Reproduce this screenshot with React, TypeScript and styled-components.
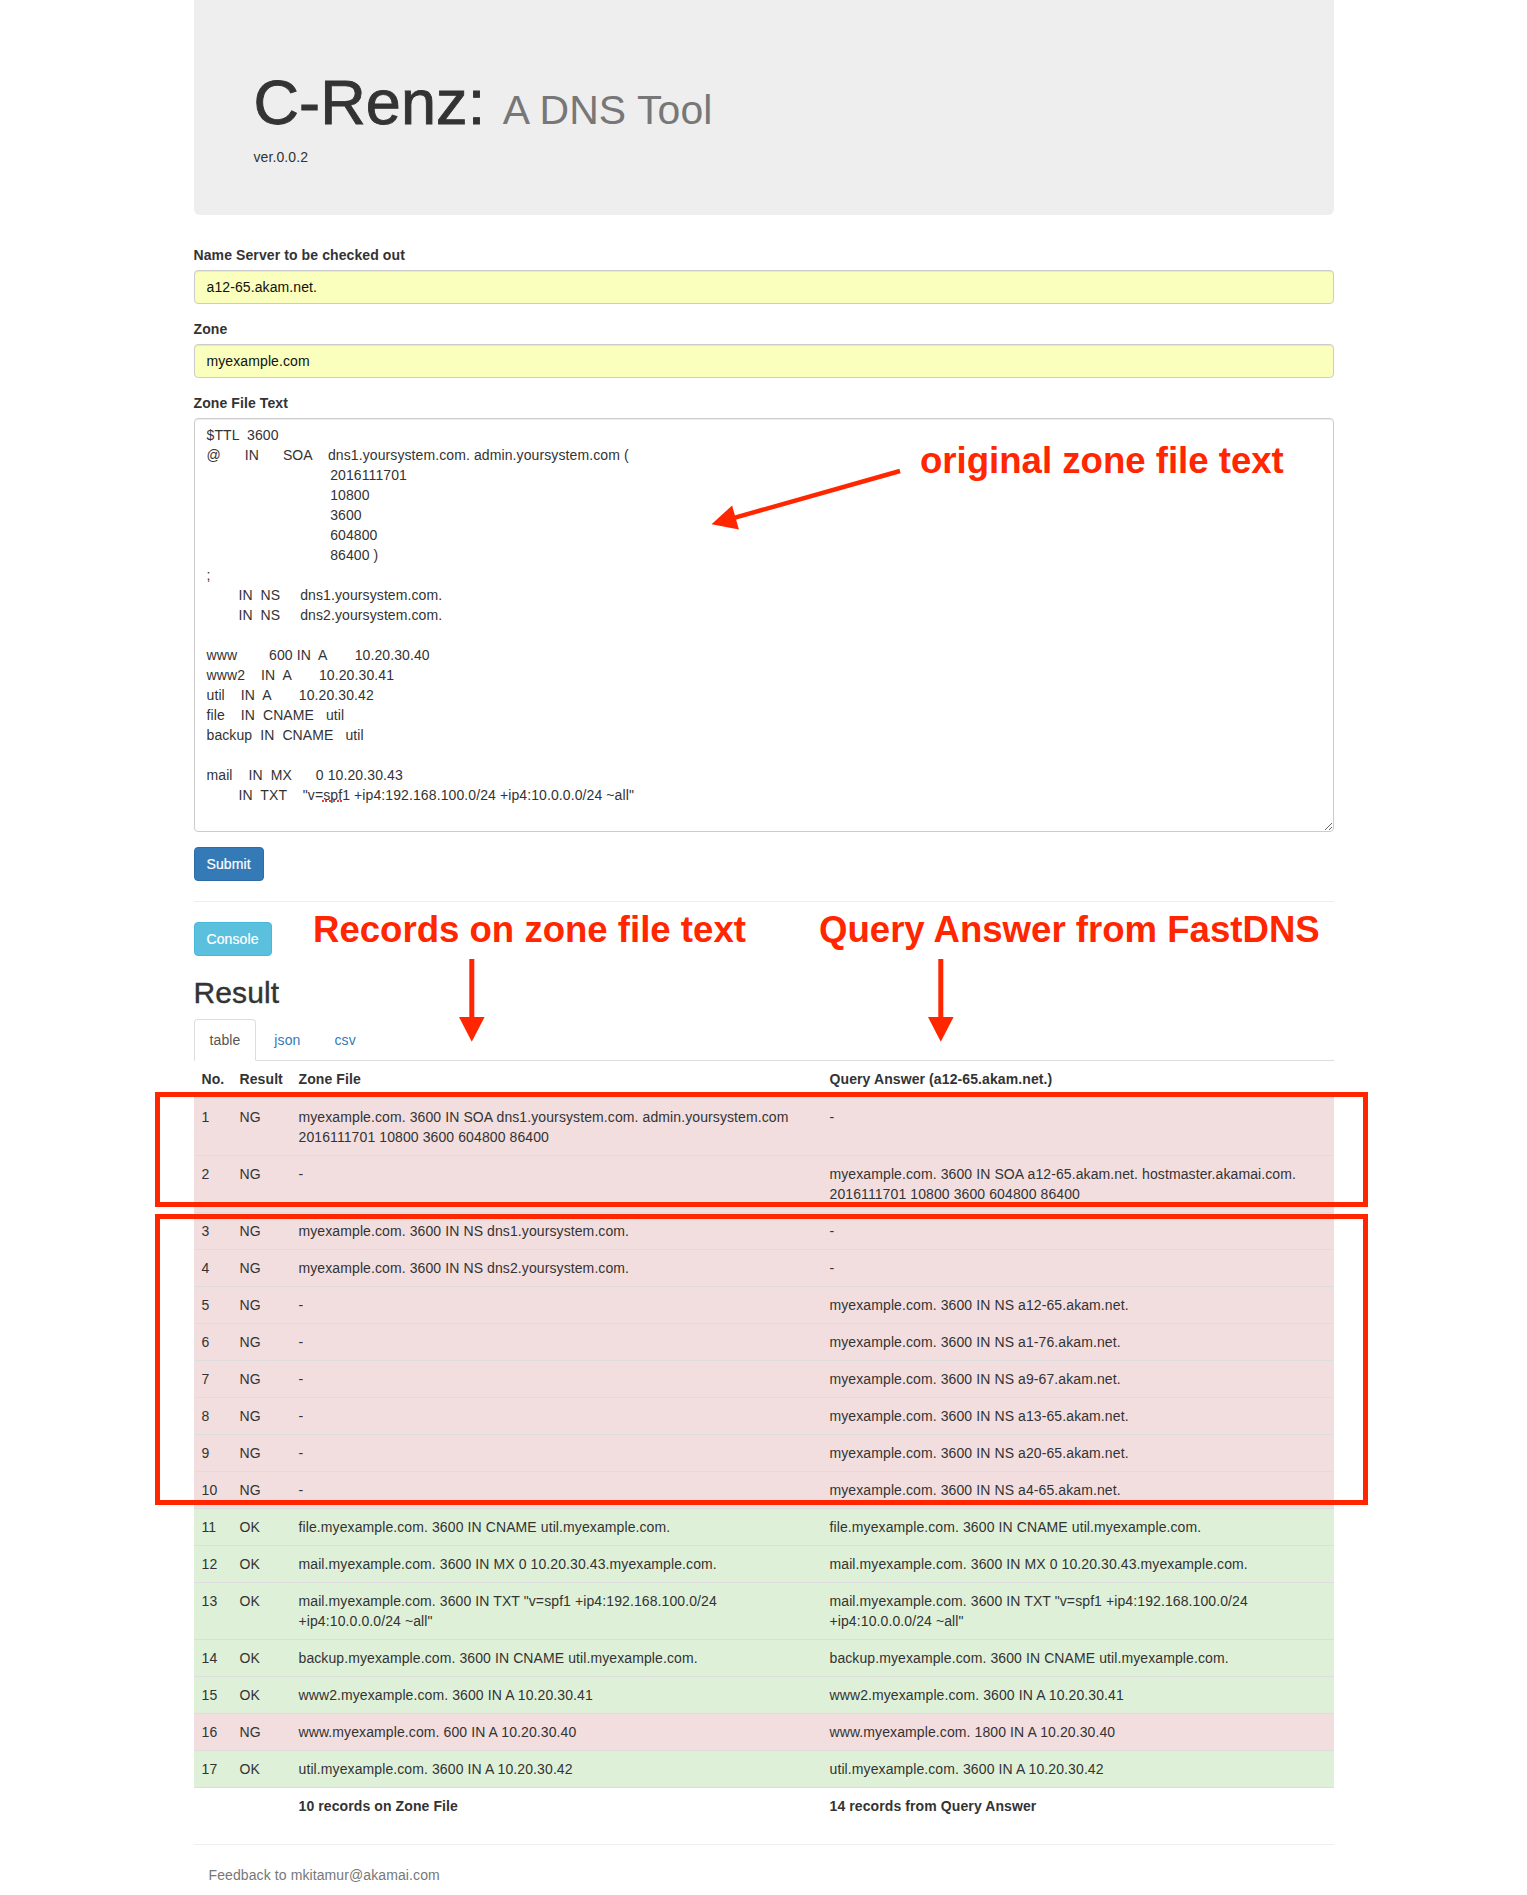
import React from "react";
import styled, { createGlobalStyle, css } from "styled-components";

const RED = "#ff2600";

const GlobalStyle = createGlobalStyle`
  *, *::before, *::after { box-sizing: border-box; }
  html, body { margin: 0; padding: 0; background: #fff; }
  body {
    font-family: "Liberation Sans", Arial, Helvetica, sans-serif;
    font-size: 14px;
    line-height: 1.42857143;
    letter-spacing: 0.1px;
    color: #333;
  }
`;

const Page = styled.div`
  position: relative;
  min-height: 1880px;
`;

const Container = styled.div`
  width: 1170px;
  padding: 0 15px;
  margin: 0 auto;
`;

const Jumbotron = styled.header`
  background: #eee;
  border-radius: 0 0 6px 6px;
  padding: 48px 60px;
  margin-bottom: 30px;
`;

const Title = styled.h1`
  margin: 20px 0 10px;
  font-size: 63px;
  font-weight: 500;
  line-height: 1.1;
  color: #333;
  -webkit-text-stroke: 0.9px #333;
`;

const TitleSub = styled.small`
  font-size: 65%;
  font-weight: 400;
  line-height: 1;
  color: #777;
  -webkit-text-stroke: 0;
`;

const Version = styled.div`
  font-size: 14px;
  line-height: 20px;
`;

const FormGroup = styled.div`
  margin-bottom: 15px;
`;

const Label = styled.label`
  display: inline-block;
  max-width: 100%;
  margin-bottom: 5px;
  font-weight: 700;
`;

const fieldBase = css`
  display: block;
  width: 100%;
  padding: 6px 12px;
  font-family: inherit;
  font-size: 14px;
  line-height: 1.42857143;
  letter-spacing: 0.1px;
  border: 1px solid #ccc;
  border-radius: 4px;
  box-shadow: inset 0 1px 1px rgba(0, 0, 0, 0.075);
  outline: none;
`;

const Input = styled.input`
  ${fieldBase};
  height: 34px;
  color: #111;
  background: #faffbd;
`;

const TextArea = styled.textarea`
  ${fieldBase};
  height: 414px;
  color: #333;
  background: #fff;
  white-space: pre;
  overflow: hidden;
`;

const ButtonRow = styled.div`
  display: flex;
`;

const Button = styled.button<{ $variant: "primary" | "info" }>`
  display: inline-block;
  padding: 6px 12px;
  font-family: inherit;
  font-size: 14px;
  line-height: 1.42857143;
  letter-spacing: 0.1px;
  color: #fff;
  border: 1px solid;
  border-radius: 4px;
  cursor: pointer;
  -webkit-text-stroke: 0.2px #fff;
  ${(p) =>
    p.$variant === "primary"
      ? css`
          background: #337ab7;
          border-color: #2e6da4;
        `
      : css`
          background: #5bc0de;
          border-color: #46b8da;
        `}
`;

const Rule = styled.hr`
  height: 0;
  margin: 20px 0;
  border: 0;
  border-top: 1px solid #eee;
`;

const SectionTitle = styled.h2`
  margin: 20px 0 10px;
  font-size: 30px;
  font-weight: 500;
  line-height: 1.1;
  color: #333;
  -webkit-text-stroke: 0.4px #333;
`;

const TabList = styled.ul`
  display: flex;
  list-style: none;
  margin: 0;
  padding: 0;
  border-bottom: 1px solid #ddd;
`;

const TabItem = styled.li`
  margin-bottom: -1px;
`;

const TabLink = styled.a<{ $active?: boolean }>`
  display: block;
  margin-right: 2px;
  padding: 10px 15px;
  line-height: 1.42857143;
  border: 1px solid transparent;
  border-radius: 4px 4px 0 0;
  text-decoration: none;
  color: #337ab7;
  ${(p) =>
    p.$active &&
    css`
      color: #555;
      background: #fff;
      border-color: #ddd #ddd transparent;
    `}
`;

const Table = styled.table`
  width: 100%;
  border-collapse: collapse;
  border-spacing: 0;
  table-layout: fixed;
  margin-bottom: 20px;
`;

const Th = styled.th`
  padding: 8px;
  text-align: left;
  vertical-align: bottom;
  border-bottom: 2px solid #ddd;
  line-height: 1.42857143;
  font-weight: 700;
`;

const Row = styled.tr<{ $status?: "OK" | "NG" }>`
  background: ${(p) =>
    p.$status === "OK" ? "#dff0d8" : p.$status === "NG" ? "#f2dede" : "transparent"};
`;

const Td = styled.td<{ $bold?: boolean }>`
  padding: 8px;
  vertical-align: top;
  border-top: 1px solid #ddd;
  line-height: 1.42857143;
  font-weight: ${(p) => (p.$bold ? 700 : 400)};
`;

const Footer = styled.footer`
  padding: 0 15px;
  color: #777;
  line-height: 20px;
`;

/* ---------- annotation layer (drawn over the page) ---------- */

const Callout = styled.div<{ $x: number; $y: number }>`
  position: absolute;
  left: ${(p) => p.$x}px;
  top: ${(p) => p.$y}px;
  font-family: "Liberation Sans", Arial, sans-serif;
  font-weight: 700;
  font-size: 36.6px;
  line-height: 37px;
  letter-spacing: 0;
  color: ${RED};
  white-space: nowrap;
`;

const Frame = styled.div<{ $x: number; $y: number; $w: number; $h: number }>`
  position: absolute;
  left: ${(p) => p.$x}px;
  top: ${(p) => p.$y}px;
  width: ${(p) => p.$w}px;
  height: ${(p) => p.$h}px;
  border: 5px solid ${RED};
  pointer-events: none;
`;

const SpellMark = styled.div<{ $x: number; $y: number; $w: number }>`
  position: absolute;
  left: ${(p) => p.$x}px;
  top: ${(p) => p.$y}px;
  width: ${(p) => p.$w}px;
  height: 0;
  border-bottom: 2px dotted #e0453a;
  pointer-events: none;
`;

const ArrowSvg = styled.svg<{ $x: number; $y: number }>`
  position: absolute;
  left: ${(p) => p.$x}px;
  top: ${(p) => p.$y}px;
  overflow: visible;
`;

const DownArrow: React.FC<{ x: number; y: number }> = ({ x, y }) => (
  <ArrowSvg $x={x} $y={y} width={28} height={90} viewBox="0 0 28 90">
    <line x1={13.8} y1={4} x2={13.8} y2={64} stroke={RED} strokeWidth={5} />
    <polygon points="1,62 26.6,62 13.8,86.7" fill={RED} />
  </ArrowSvg>
);

const SlantArrow: React.FC<{ x: number; y: number }> = ({ x, y }) => (
  <ArrowSvg $x={x} $y={y} width={210} height={80} viewBox="0 0 210 80">
    <line x1={200} y1={11} x2={35} y2={57.6} stroke={RED} strokeWidth={4.5} />
    <polygon points="11.5,64.3 38.9,69.5 32.1,45.5" fill={RED} />
  </ArrowSvg>
);

/* ---------- data ---------- */

const sp = (n: number) => " ".repeat(n);

const zoneText = [
  "$TTL" + sp(2) + "3600",
  "@" + sp(6) + "IN" + sp(6) + "SOA" + sp(4) + "dns1.yoursystem.com. admin.yoursystem.com (",
  sp(31) + "2016111701",
  sp(31) + "10800",
  sp(31) + "3600",
  sp(31) + "604800",
  sp(31) + "86400 )",
  ";",
  sp(8) + "IN" + sp(2) + "NS" + sp(5) + "dns1.yoursystem.com.",
  sp(8) + "IN" + sp(2) + "NS" + sp(5) + "dns2.yoursystem.com.",
  "",
  "www" + sp(8) + "600 IN" + sp(2) + "A" + sp(7) + "10.20.30.40",
  "www2" + sp(4) + "IN" + sp(2) + "A" + sp(7) + "10.20.30.41",
  "util" + sp(4) + "IN" + sp(2) + "A" + sp(7) + "10.20.30.42",
  "file" + sp(4) + "IN" + sp(2) + "CNAME" + sp(3) + "util",
  "backup" + sp(2) + "IN" + sp(2) + "CNAME" + sp(3) + "util",
  "",
  "mail" + sp(4) + "IN" + sp(2) + "MX" + sp(6) + "0 10.20.30.43",
  sp(8) + "IN" + sp(2) + "TXT" + sp(4) + '"v=spf1 +ip4:192.168.100.0/24 +ip4:10.0.0.0/24 ~all"',
].join("\n");

type Rec = { no: number; result: "OK" | "NG"; zone: string; answer: string };

const same = (no: number, s: string): Rec => ({ no, result: "OK", zone: s, answer: s });

const records: Rec[] = [
  {
    no: 1,
    result: "NG",
    zone: "myexample.com. 3600 IN SOA dns1.yoursystem.com. admin.yoursystem.com 2016111701 10800 3600 604800 86400",
    answer: "-",
  },
  {
    no: 2,
    result: "NG",
    zone: "-",
    answer: "myexample.com. 3600 IN SOA a12-65.akam.net. hostmaster.akamai.com. 2016111701 10800 3600 604800 86400",
  },
  { no: 3, result: "NG", zone: "myexample.com. 3600 IN NS dns1.yoursystem.com.", answer: "-" },
  { no: 4, result: "NG", zone: "myexample.com. 3600 IN NS dns2.yoursystem.com.", answer: "-" },
  { no: 5, result: "NG", zone: "-", answer: "myexample.com. 3600 IN NS a12-65.akam.net." },
  { no: 6, result: "NG", zone: "-", answer: "myexample.com. 3600 IN NS a1-76.akam.net." },
  { no: 7, result: "NG", zone: "-", answer: "myexample.com. 3600 IN NS a9-67.akam.net." },
  { no: 8, result: "NG", zone: "-", answer: "myexample.com. 3600 IN NS a13-65.akam.net." },
  { no: 9, result: "NG", zone: "-", answer: "myexample.com. 3600 IN NS a20-65.akam.net." },
  { no: 10, result: "NG", zone: "-", answer: "myexample.com. 3600 IN NS a4-65.akam.net." },
  same(11, "file.myexample.com. 3600 IN CNAME util.myexample.com."),
  same(12, "mail.myexample.com. 3600 IN MX 0 10.20.30.43.myexample.com."),
  same(13, 'mail.myexample.com. 3600 IN TXT "v=spf1 +ip4:192.168.100.0/24 +ip4:10.0.0.0/24 ~all"'),
  same(14, "backup.myexample.com. 3600 IN CNAME util.myexample.com."),
  same(15, "www2.myexample.com. 3600 IN A 10.20.30.41"),
  {
    no: 16,
    result: "NG",
    zone: "www.myexample.com. 600 IN A 10.20.30.40",
    answer: "www.myexample.com. 1800 IN A 10.20.30.40",
  },
  same(17, "util.myexample.com. 3600 IN A 10.20.30.42"),
];

export default function App() {
  return (
    <Page>
      <GlobalStyle />
      <Container>
        <Jumbotron>
          <Title>
            C-Renz: <TitleSub>A DNS Tool</TitleSub>
          </Title>
          <Version>ver.0.0.2</Version>
        </Jumbotron>

        <form onSubmit={(e) => e.preventDefault()}>
          <FormGroup>
            <Label htmlFor="ns">Name Server to be checked out</Label>
            <Input id="ns" defaultValue="a12-65.akam.net." />
          </FormGroup>
          <FormGroup>
            <Label htmlFor="zone">Zone</Label>
            <Input id="zone" defaultValue="myexample.com" />
          </FormGroup>
          <FormGroup>
            <Label htmlFor="zonetext">Zone File Text</Label>
            <TextArea id="zonetext" rows={20} spellCheck={false} defaultValue={zoneText} />
          </FormGroup>
          <ButtonRow>
            <Button $variant="primary" type="submit">
              Submit
            </Button>
          </ButtonRow>
        </form>

        <Rule />

        <ButtonRow>
          <Button $variant="info" type="button">
            Console
          </Button>
        </ButtonRow>

        <SectionTitle>Result</SectionTitle>

        <TabList>
          <TabItem>
            <TabLink $active href="#table">
              table
            </TabLink>
          </TabItem>
          <TabItem>
            <TabLink href="#json">json</TabLink>
          </TabItem>
          <TabItem>
            <TabLink href="#csv">csv</TabLink>
          </TabItem>
        </TabList>

        <Table>
          <colgroup>
            <col style={{ width: 38 }} />
            <col style={{ width: 59 }} />
            <col style={{ width: 531 }} />
            <col style={{ width: 512 }} />
          </colgroup>
          <thead>
            <tr>
              <Th>No.</Th>
              <Th>Result</Th>
              <Th>Zone File</Th>
              <Th>Query Answer (a12-65.akam.net.)</Th>
            </tr>
          </thead>
          <tbody>
            {records.map((r) => (
              <Row key={r.no} $status={r.result}>
                <Td>{r.no}</Td>
                <Td>{r.result}</Td>
                <Td>{r.zone}</Td>
                <Td>{r.answer}</Td>
              </Row>
            ))}
            <Row>
              <Td />
              <Td />
              <Td $bold>10 records on Zone File</Td>
              <Td $bold>14 records from Query Answer</Td>
            </Row>
          </tbody>
        </Table>

        <Rule />

        <Footer>Feedback to mkitamur@akamai.com</Footer>
      </Container>

      {/* spell-check mark inside the textarea */}
      <SpellMark $x={322} $y={800} $w={20} />

      {/* annotations drawn over the screenshot */}
      <Callout $x={920} $y={442}>original zone file text</Callout>
      <SlantArrow x={700} y={460} />
      <Callout $x={313} $y={911}>Records on zone file text</Callout>
      <Callout $x={819} $y={911}>Query Answer from FastDNS</Callout>
      <DownArrow x={458} y={955} />
      <DownArrow x={926.6} y={955} />
      <Frame $x={155} $y={1092} $w={1213} $h={115} />
      <Frame $x={155} $y={1214} $w={1213} $h={291} />
    </Page>
  );
}
